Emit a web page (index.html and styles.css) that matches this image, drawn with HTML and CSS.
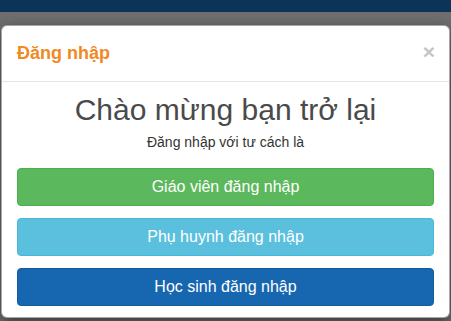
FILE: index.html
```html
<!DOCTYPE html>
<html lang="vi">
<head>
<meta charset="utf-8">
<title>Đăng nhập</title>
<link rel="stylesheet" href="styles.css">
</head>
<body>
<div class="topbar"></div>
<div class="backdrop">
  <div class="modal">
    <div class="modal-header">
      <h4 class="modal-title">Đăng nhập</h4>
      <span class="close">×</span>
    </div>
    <div class="modal-body">
      <h1 class="welcome">Chào mừng bạn trở lại</h1>
      <p class="sub">Đăng nhập với tư cách là</p>
      <div class="buttons">
        <button class="btn btn-green">Giáo viên đăng nhập</button>
        <button class="btn btn-info">Phụ huynh đăng nhập</button>
        <button class="btn btn-blue">Học sinh đăng nhập</button>
      </div>
    </div>
  </div>
</div>
</body>
</html>
```
FILE: styles.css
```css
* { box-sizing: border-box; }
html, body {
  margin: 0;
  padding: 0;
  height: 100%;
  overflow: hidden;
}
body {
  font-family: "Liberation Sans", Arial, sans-serif;
  font-size: 14px;
  line-height: 1.42857;
  color: #333;
  background: #6f6f6f;
}
.topbar {
  height: 12px;
  background: #0c3459;
}
.backdrop {
  padding: 13px 1px 0 1px;
  background: #6f6f6f;
}
.modal {
  background: #fff;
  border: 1px solid rgba(0, 0, 0, 0.35);
  border-radius: 6px;
  box-shadow: 0 5px 15px rgba(0, 0, 0, 0.5);
  overflow: hidden;
}
.modal-header {
  display: flex;
  justify-content: space-between;
  align-items: flex-start;
  padding: 15px 14px 15px 15px;
  border-bottom: 1px solid #e5e5e5;
}
.modal-title {
  margin: 0;
  font-size: 18px;
  font-weight: bold;
  line-height: 25px;
  color: #f0891f;
}
.close {
  font-size: 21px;
  font-weight: bold;
  line-height: 1;
  color: #c4c4c4;
}
.modal-body {
  padding: 11px 15px 11px 15px;
  text-align: center;
}
.welcome {
  margin: 0;
  font-size: 30px;
  font-weight: normal;
  line-height: 33px;
  color: #4a4a4a;
}
.sub {
  margin: 6px 0 0 0;
  font-size: 14px;
  line-height: 20px;
  color: #333;
}
.buttons {
  display: flex;
  flex-direction: column;
  gap: 12px;
  margin-top: 16px;
}
.btn {
  display: block;
  width: 100%;
  height: 38px;
  border: 1px solid transparent;
  border-radius: 4px;
  font-family: "Liberation Sans", Arial, sans-serif;
  font-size: 16px;
  color: #fff;
  padding: 0 12px;
  cursor: pointer;
}
.btn-green {
  background: #5cb85c;
  border-color: #4cae4c;
}
.btn-info {
  background: #5bc0de;
  border-color: #46b8da;
}
.btn-blue {
  background: #1766b0;
  border-color: #125ca0;
}
```
